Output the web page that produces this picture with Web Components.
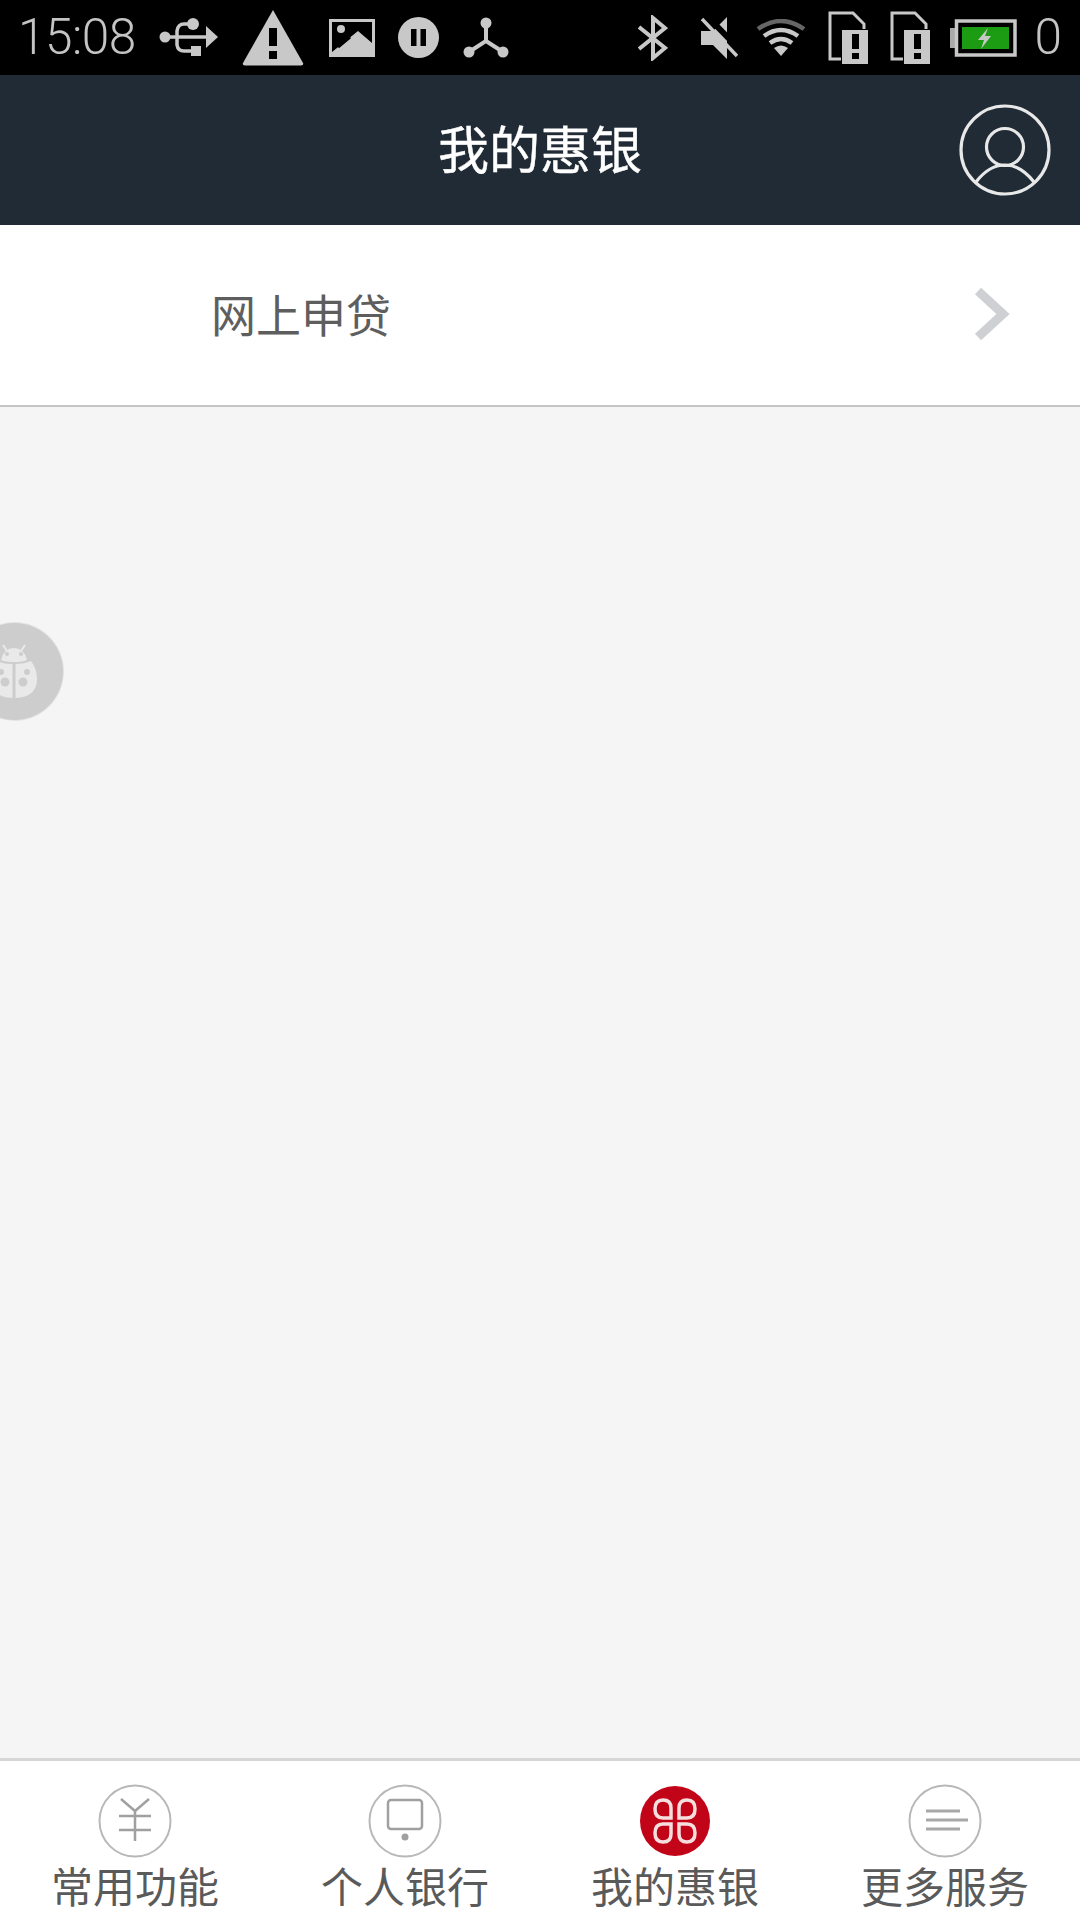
<!doctype html>
<html lang="zh"><head><meta charset="utf-8"><style>
html,body{margin:0;height:100%}
body{width:1080px;height:1920px;overflow:hidden;background:#f5f5f5;font-family:"Noto Sans CJK SC","Noto Sans",sans-serif}
</style></head><body>
<app-screen>
<status-bar slot="status"></status-bar>
<app-header slot="header" title="我的惠银"></app-header>
<list-row slot="content" label="网上申贷"></list-row>
<debug-bug slot="overlay"></debug-bug>
<tab-bar slot="tabs"></tab-bar>
</app-screen>
<script>
function def(name,html){customElements.define(name,class extends HTMLElement{connectedCallback(){if(this.shadowRoot)return;const r=this.attachShadow({mode:'open'});r.innerHTML=typeof html==='function'?html(this):html;}})}
def('app-screen',`<style>:host{display:flex;flex-direction:column;position:relative;width:1080px;height:1920px;overflow:hidden}
.main{flex:1;min-height:0;background:#f5f5f5}</style>
<slot name="status"></slot><slot name="header"></slot><div class="main"><slot name="content"></slot></div><slot name="overlay"></slot><slot name="tabs"></slot>`);
const g='#c8c8c8';
def('status-bar',`<style>:host{display:flex;align-items:center;height:75px;background:#000;color:#c4c4c4;font-family:Roboto,"Liberation Sans",sans-serif;font-weight:300;font-size:49.5px;box-sizing:border-box;padding-left:18px;flex:none}
svg{display:block;flex:none}.t{width:123px;line-height:75px;letter-spacing:-.5px}.z{margin-left:18px;line-height:75px}.sp{flex:1}</style>
<span class="t">15:08</span>
<svg style="margin-left:18px" width="60" height="40" viewBox="0 0 60 40" fill="none" stroke="${g}"><circle cx="6" cy="19" r="5.500" fill="${g}" stroke="none"/><circle cx="34" cy="6" r="6" fill="${g}" stroke="none"/><path d="M6 19H50" stroke-width="3.500"/><path d="M47 8l12 11-12 11z" fill="${g}" stroke="none"/><path d="M34 6h-9q-6 0-7 7v14q1 6 7 6h10" stroke-width="3.500"/><rect x="32" y="28" width="10" height="10" fill="${g}" stroke="none"/></svg>
<svg style="margin-left:23px" width="62" height="58" viewBox="0 0 62 58"><path d="M31 1L61 54q1 2.500-2 2.500H3q-3 0-2-2.500z" fill="${g}"/><rect x="27" y="19" width="8" height="18" fill="#000"/><rect x="27" y="42" width="8" height="8" fill="#000"/></svg>
<svg style="margin-left:24px" width="48" height="40" viewBox="0 0 48 40"><rect x="1" y="1" width="46" height="38" fill="${g}"/><path d="M4 4H44V25L30 13 4 34z" fill="#000"/><circle cx="13" cy="11" r="4" fill="${g}"/><path d="M10 29L22 19" stroke="#000" stroke-width="3"/></svg>
<svg style="margin-left:22px" width="41" height="41" viewBox="0 0 41 41"><circle cx="20.500" cy="20.500" r="20.500" fill="${g}"/><rect x="13" y="12" width="5.500" height="17" fill="#000"/><rect x="22.500" y="12" width="5.500" height="17" fill="#000"/></svg>
<svg style="margin-left:24px" width="46" height="42" viewBox="0 0 46 42" fill="none" stroke="${g}" stroke-width="4"><circle cx="23" cy="6" r="5.500" fill="${g}" stroke="none"/><circle cx="6" cy="35" r="5.500" fill="${g}" stroke="none"/><circle cx="40" cy="35" r="5.500" fill="${g}" stroke="none"/><path d="M23 8V24L6 35M23 24L40 35"/></svg>
<span class="sp"></span>
<svg width="30" height="46" viewBox="0 0 30 46" fill="none" stroke="${g}" stroke-width="4"><path d="M1 12L27 33 15 43V3L27 13 1 34"/></svg>
<svg style="margin-left:33px" width="37" height="44" viewBox="0 0 37 44"><path d="M0 15H12L26 1V43L12 29H0z" fill="${g}"/><path d="M6 0L37 32" stroke="#000" stroke-width="6"/><path d="M1 3L36 40" stroke="${g}" stroke-width="3.500"/></svg>
<svg style="margin-left:18px" width="50" height="38" viewBox="0 0 50 38" fill="none" stroke-width="4.500"><path d="M2 10Q25-6 48 10" stroke="#666"/><path d="M8 17Q25 5 42 17" stroke="${g}"/><path d="M14 24Q25 16 36 24" stroke="${g}"/><path d="M18 29Q25 24 32 29L25 37z" fill="${g}"/></svg>
<svg style="margin-left:22px" width="40" height="53" viewBox="0 0 40 53"><path d="M2 2H25L36 13V48H2z" fill="none" stroke="${g}" stroke-width="3"/><rect x="13" y="18" width="27" height="35" fill="#000"/><rect x="14" y="19" width="26" height="34" fill="${g}"/><rect x="24" y="23" width="7" height="15" fill="#000"/><rect x="24" y="42" width="7" height="6" fill="#000"/></svg>
<svg style="margin-left:22px" width="40" height="53" viewBox="0 0 40 53"><path d="M2 2H25L36 13V48H2z" fill="none" stroke="${g}" stroke-width="3"/><rect x="13" y="18" width="27" height="35" fill="#000"/><rect x="14" y="19" width="26" height="34" fill="${g}"/><rect x="24" y="23" width="7" height="15" fill="#000"/><rect x="24" y="42" width="7" height="6" fill="#000"/></svg>
<svg style="margin-left:20px" width="67" height="38" viewBox="0 0 67 38"><rect x="0" y="9" width="6" height="20" fill="#aaa"/><rect x="6.500" y="2" width="58.500" height="34" fill="#000" stroke="${g}" stroke-width="3.500"/><rect x="12" y="8" width="47" height="22" fill="#1c9c12"/><path d="M38 9L28 21h6l-3 9 10-13h-6z" fill="${g}"/></svg>
<span class="z">0</span><span style="width:18px"></span>`);
def('app-header',h=>`<style>:host{display:flex;align-items:center;justify-content:center;position:relative;height:150px;background:#202b36;color:#fff;flex:none;box-sizing:border-box;padding-bottom:5px}
.t{font-size:51px;line-height:1;-webkit-text-stroke:.4px #fff}
svg{position:absolute;left:959px;top:29px}</style>
<span class="t">${h.getAttribute('title')}</span>
<svg width="92" height="92" viewBox="0 0 92 92" fill="none" stroke="#e8e8e8" stroke-width="3.200"><circle cx="46" cy="46" r="44"/><circle cx="46" cy="43" r="18.500"/><path d="M17 78Q30 61 46 61Q62 61 75 78"/></svg>`);
def('list-row',h=>`<style>:host{display:flex;align-items:center;height:177px;background:#fff;border-bottom:2px solid #c4c4c4;color:#5e5e5e;font-size:45px;padding:0 70px 3px 211px;flex:none}
span{flex:1;line-height:1}svg{display:block}</style>
<span>${h.getAttribute('label')}</span>
<svg width="36" height="54" viewBox="0 0 36 54" fill="none" stroke="#cfd0d4" stroke-width="9"><path d="M4 4L29 27 4 50"/></svg>`);
def('debug-bug',`<style>:host{position:absolute;left:-34px;top:623px;width:97px;height:97px;border-radius:50%;background:#cdcdcd;box-shadow:0 0 0 1px #e4e4e4}
svg{display:block}</style>
<svg width="97" height="97" viewBox="0 0 97 97"><path d="M37 22L41 28M59 22L55 28" stroke="#e9e9e9" stroke-width="2" fill="none"/><g fill="#e9e9e9"><path d="M35 37Q38 25 48 25Q58 25 61 37Q56 39 48 39Q40 39 35 37z"/><path d="M46.500 41V75Q25 74 25 56Q25 46 31 38Q38 41 46.500 41z"/><path d="M49.500 41V75Q71 74 71 56Q71 46 65 38Q58 41 49.500 41z"/></g><g fill="#cdcdcd"><circle cx="39" cy="59" r="4.500"/><circle cx="57" cy="59" r="4.500"/><circle cx="35" cy="49" r="3"/><circle cx="61" cy="49" r="3"/><circle cx="41" cy="31" r="2"/><circle cx="55" cy="31" r="2"/></g></svg>`);
def('tab-item',h=>`<style>:host{flex:1;display:flex;flex-direction:column;align-items:center;padding-top:23px;color:#5a5a5a;font-size:42px;min-width:0}
span{line-height:50px;margin-top:2px;white-space:nowrap}</style>
<slot></slot><span>${h.getAttribute('label')}</span>`);
const ci=`<circle cx="37" cy="37" r="35.500" fill="none" stroke="#b8b8b8" stroke-width="2"/>`;
def('tab-bar',`<style>:host{display:flex;height:162px;background:#fff;border-top:3px solid #d6d6d6;box-sizing:border-box;flex:none}
svg{display:block}</style>
<tab-item label="常用功能"><svg width="74" height="74" viewBox="0 0 74 74" fill="none" stroke="#a0a0a0" stroke-width="2.500">${ci}<path d="M23 15L37 27 51 15M21 32H53M21 46H53M37 27V57"/></svg></tab-item>
<tab-item label="个人银行"><svg width="74" height="74" viewBox="0 0 74 74" fill="none" stroke="#a0a0a0" stroke-width="2.500">${ci}<rect x="20" y="16" width="34" height="29" rx="3"/><circle cx="37" cy="53" r="3.500" fill="#a0a0a0" stroke="none"/></svg></tab-item>
<tab-item label="我的惠银"><svg width="74" height="74" viewBox="0 0 74 74" fill="none" stroke="#f7dede" stroke-width="3.500"><circle cx="37" cy="37" r="35" fill="#c10417" stroke="none"/><path d="M25 16q8 0 8 8v10H25q-8 0-8-9Q17 16 25 16zM49 16q-8 0-8 8v10h8q8 0 8-9Q57 16 49 16zM25 58q8 0 8-8V40H25q-8 0-8 9Q17 58 25 58zM49 58q-8 0-8-8V40h8q8 0 8 9Q57 58 49 58z"/></svg></tab-item>
<tab-item label="更多服务"><svg width="74" height="74" viewBox="0 0 74 74" fill="none" stroke="#a8a8a8" stroke-width="3">${ci}<path d="M18 27H52M18 36H60M18 45H52"/></svg></tab-item>`);
</script>
</body></html>
